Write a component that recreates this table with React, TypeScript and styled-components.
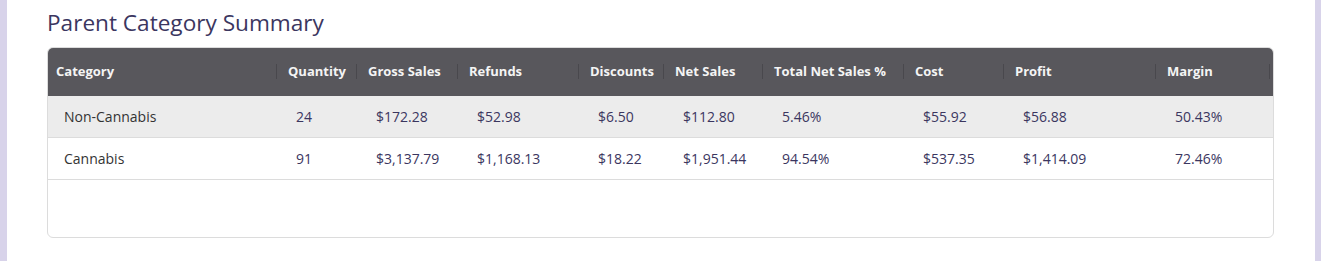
import styled, { createGlobalStyle } from "styled-components";

const GlobalStyle = createGlobalStyle`
	html, body {
		margin: 0;
		padding: 0;
		background: #d8d3ea;
	}
	body {
		font-family: "Open Sans", "Liberation Sans", sans-serif;
	}
`;

const Page = styled.div`
	height: 261px;
	margin: 0 6px 0 7px;
	background: #ffffff;
	padding: 6px 41px 0 40px;
	box-sizing: border-box;
`;

const Title = styled.h2`
	margin: 0 0 7px 0;
	font-size: 22.6px;
	line-height: 34px;
	font-weight: 500;
	color: #3b365f;
`;

const TableCard = styled.div`
	height: 191px;
	border: 1px solid #dcdcdc;
	border-radius: 6px;
	overflow: hidden;
	box-sizing: border-box;
`;

const Table = styled.table`
	width: 100%;
	border-collapse: collapse;
	table-layout: fixed;
`;

const HeadCell = styled.th<{ $first?: boolean; $last?: boolean }>`
	position: relative;
	box-sizing: border-box;
	height: 48px;
	padding: 0 0 2px ${(p) => (p.$first ? 8 : 11)}px;
	background: #58575c;
	color: #f4f4f4;
	font-size: 13px;
	font-weight: 700;
	text-align: left;
	white-space: nowrap;

	&::after {
		content: "";
		position: absolute;
		right: ${(p) => (p.$last ? 3 : 0)}px;
		top: 16px;
		width: 1px;
		height: 15px;
		background: #49484d;
	}
`;

const Row = styled.tr<{ $shaded?: boolean }>`
	background: ${(p) => (p.$shaded ? "#ececec" : "#ffffff")};
	border-bottom: 1px solid #dcdcdc;
`;

const Cell = styled.td<{ $first?: boolean; $label?: boolean; $tall?: boolean }>`
	box-sizing: border-box;
	padding: 0 0 0 ${(p) => (p.$first ? 16 : 19)}px;
	height: ${(p) => (p.$tall ? 42 : 41)}px;
	font-size: 14px;
	color: ${(p) => (p.$label ? "#333333" : "#3b365f")};
	white-space: nowrap;
`;

const columns = [
	{ title: "Category", width: 229 },
	{ title: "Quantity", width: 80 },
	{ title: "Gross Sales", width: 101 },
	{ title: "Refunds", width: 121 },
	{ title: "Discounts", width: 85 },
	{ title: "Net Sales", width: 99 },
	{ title: "Total Net Sales %", width: 141 },
	{ title: "Cost", width: 100 },
	{ title: "Profit", width: 152 },
	{ title: "Margin", width: 117 }
];

const rows = [
	["Non-Cannabis", "24", "$172.28", "$52.98", "$6.50", "$112.80", "5.46%", "$55.92", "$56.88", "50.43%"],
	["Cannabis", "91", "$3,137.79", "$1,168.13", "$18.22", "$1,951.44", "94.54%", "$537.35", "$1,414.09", "72.46%"]
];

const App = () => {
	return (
		<>
			<GlobalStyle />
			<Page>
				<Title>Parent Category Summary</Title>
				<TableCard>
					<Table>
						<colgroup>
							{columns.map((col) => (
								<col key={col.title} style={{ width: col.width }} />
							))}
						</colgroup>
						<thead>
							<tr>
								{columns.map((col, i) => (
									<HeadCell key={col.title} $first={i === 0} $last={i === columns.length - 1}>
										{col.title}
									</HeadCell>
								))}
							</tr>
						</thead>
						<tbody>
							{rows.map((row, r) => (
								<Row key={row[0]} $shaded={r === 0}>
									{row.map((value, i) => (
										<Cell key={i} $first={i === 0} $label={i === 0} $tall={r === 1}>
											{value}
										</Cell>
									))}
								</Row>
							))}
						</tbody>
					</Table>
				</TableCard>
			</Page>
		</>
	);
};

export default App;
